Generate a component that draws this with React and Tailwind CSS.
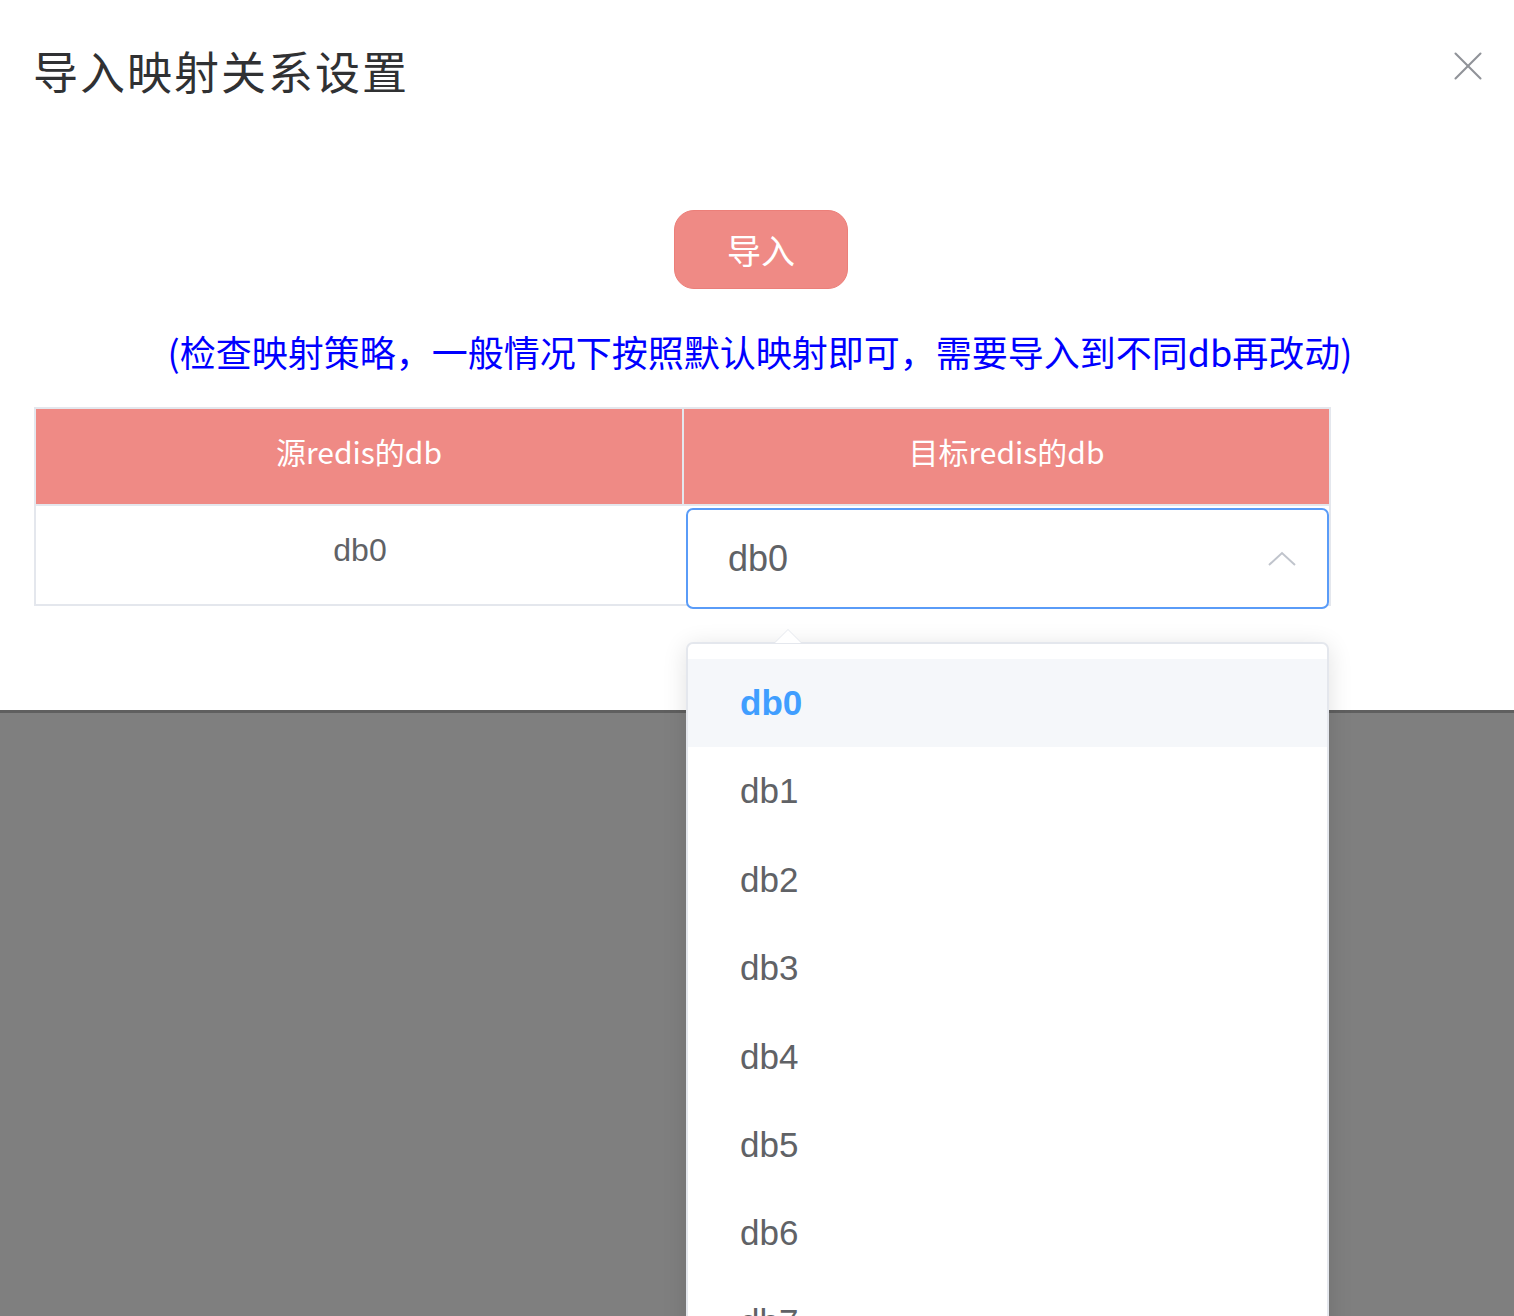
import { X } from 'lucide-react';

const options = ['db0', 'db1', 'db2', 'db3', 'db4', 'db5', 'db6', 'db7', 'db8'];

export default function App() {
  return (
    <div className="relative h-[1316px] w-[1514px] overflow-hidden bg-[#7f7f7f] font-['Noto_Sans_CJK_SC',sans-serif]">
      <div className="relative h-[710px] bg-white">
        <div className="flex items-start justify-between pl-[33px] pr-[21px] pt-[42px]">
          <h1 className="text-[45px] leading-[58px] tracking-[2px] text-[#303133]">导入映射关系设置</h1>
          <button className="-mt-[1px] text-[#909399]">
            <X size={50} strokeWidth={1.0} />
          </button>
        </div>

        <div className="mt-[110px] flex justify-center">
          <button className="ml-[8px] h-[79px] w-[174px] rounded-[20px] border border-[#ec7f79] bg-[#ef8a85] text-[34px] text-white">
            导入
          </button>
        </div>

        <p className="mt-[38px] pl-[6px] text-center text-[36px] leading-[48px] text-[#0000ff]">
          (检查映射策略，一般情况下按照默认映射即可，需要导入到不同db再改动)
        </p>

        <div className="ml-[34px] mt-[32px] w-[1297px] border-2 border-[#e4e7ed]">
          <div className="grid grid-cols-[648px_1fr] bg-[#ef8a85] text-[30px] text-white">
            <div className="flex h-[95px] items-center justify-center border-r-2 border-[#e4e7ed] pb-[10px]">源redis的db</div>
            <div className="flex h-[95px] items-center justify-center pb-[10px]">目标redis的db</div>
          </div>
          <div className="grid grid-cols-[648px_1fr] border-t-2 border-[#e4e7ed]">
            <div className="flex h-[98px] justify-center pt-[20px] font-['Liberation_Sans',sans-serif] text-[32px] text-[#606266]">
              db0
            </div>
            <div className="relative">
              <div className="mb-[-5px] ml-[2px] mt-[2px] flex h-[101px] items-center justify-between rounded-[7px] border-2 border-[#5a9cf8] bg-white pl-[40px] pr-[30px]">
                <span className="font-['Liberation_Sans',sans-serif] text-[36px] text-[#606266]">db0</span>
                <svg width="30" height="16" viewBox="0 0 30 16" fill="none">
                  <path d="M2 14 L15 2 L28 14" stroke="#c0c4cc" strokeWidth="2" />
                </svg>
              </div>

              <div className="absolute left-[2px] top-[136px] z-10 w-[643px]">
                <div className="absolute -top-[13px] left-[88px] h-0 w-0 border-x-[14px] border-b-[14px] border-x-transparent border-b-[#e4e7ed]" />
                <div className="absolute -top-[12px] left-[89px] h-0 w-0 border-x-[13px] border-b-[13px] border-x-transparent border-b-white" />
                <div className="rounded-[7px] border-2 border-[#e4e7ed] bg-white pt-[15px] shadow-[0_4px_24px_rgba(0,0,0,0.12)]">
                  {options.map((opt, i) => (
                    <div
                      key={opt}
                      className={`flex h-[88.4px] items-center pl-[52px] font-['Liberation_Sans',sans-serif] text-[35px] ${
                        i === 0 ? 'bg-[#f5f7fa] font-bold text-[#409eff]' : 'text-[#606266]'
                      }`}
                    >
                      {opt}
                    </div>
                  ))}
                </div>
              </div>
            </div>
          </div>
        </div>
      </div>
      <div className="h-[3px] bg-[#5f5f5f]" />
    </div>
  );
}
